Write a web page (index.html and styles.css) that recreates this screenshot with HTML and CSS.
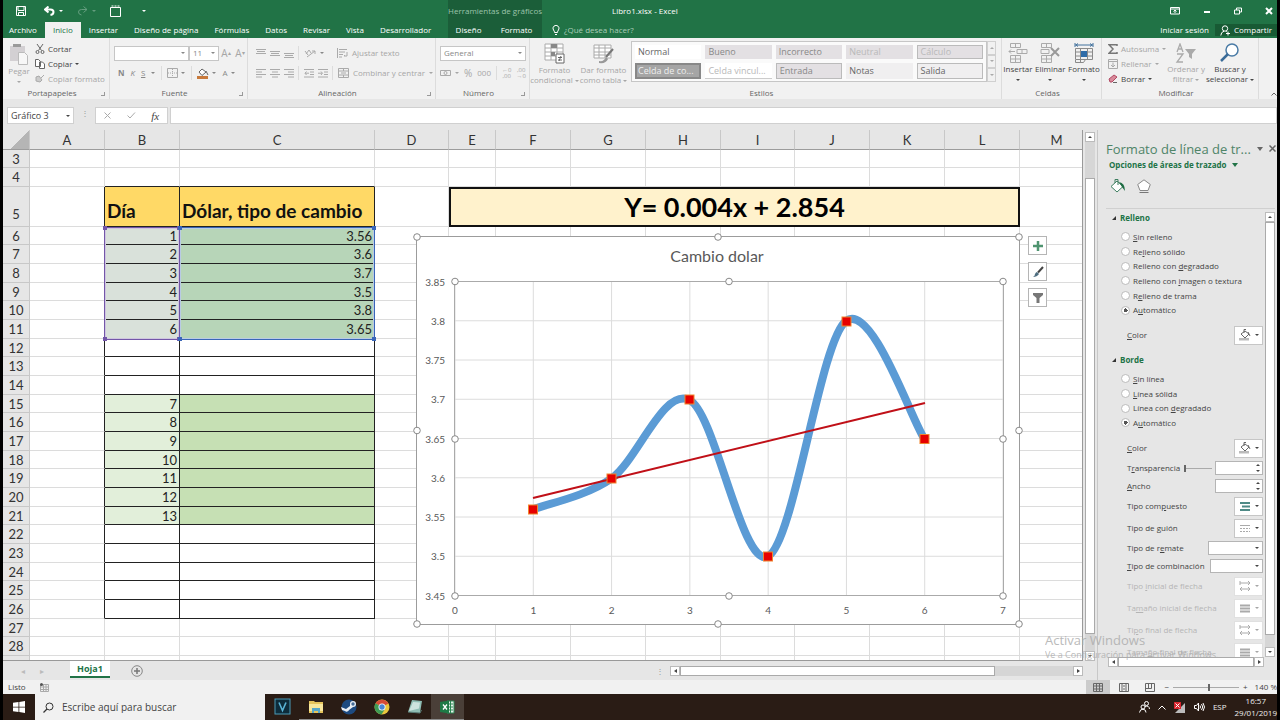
FILE: index.html
```html
<!DOCTYPE html>
<html lang="es">
<head>
  <meta charset="UTF-8" />
  <title>Libro1.xlsx - Excel</title>
  <link rel="stylesheet" href="styles.css">
</head>
<body>

<header class="top">
  <div class="top-left">
    <div class="quick">
      <button aria-label="Guardar"><svg width="10" height="10" viewBox="0 0 10 10"><path d="M.5.5h9v9h-9zM2 .5v4h6v-4M2.500 9.500v-3h5v3" class="w"/></svg></button>
      <button aria-label="Deshacer"><svg width="11" height="10" viewBox="0 0 11 10"><path d="M4.500.5L1 3.500l3.500 3M1 3.500h5.500q3 0 3 2.500T6.500 9" class="w bold"/></svg><i class="caret"></i></button>
      <button aria-label="Rehacer" class="faded"><svg width="11" height="10" viewBox="0 0 11 10"><path d="M6.500.5L10 3.500l-3.500 3M10 3.500H4.500q-3 0-3 2.500T4.500 9" class="w"/></svg><i class="caret"></i></button>
      <button aria-label="Nuevo"><svg width="12" height="12" viewBox="0 0 12 12"><path d="M.5 2.500h10v9H.5zM1.500 1h2M4.500 1h2M7.500 1h2" class="w"/></svg></button>
      <button aria-label="Personalizar"><i class="caret"></i></button>
    </div>
    <nav class="tabs">
      <a href="#">Archivo</a>
      <a href="#" class="active">Inicio</a>
      <a href="#">Insertar</a>
      <a href="#">Diseño de página</a>
      <a href="#">Fórmulas</a>
      <a href="#">Datos</a>
      <a href="#">Revisar</a>
      <a href="#">Vista</a>
      <a href="#">Desarrollador</a>
    </nav>
  </div>
  <div class="context">
    <span>Herramientas de gráficos</span>
    <nav class="tabs">
      <a href="#">Diseño</a>
      <a href="#">Formato</a>
    </nav>
  </div>
  <div class="top-right">
    <div class="title-row">
      <h1>Libro1.xlsx - Excel</h1>
      <div class="window">
        <button aria-label="Opciones de cinta"><svg width="10" height="8" viewBox="0 0 10 8"><path d="M.5.5h9v6.500h-9zM.5 2h9M5 6V3M3.500 4.500L5 3l1.500 1.500" class="w"/></svg></button>
        <button aria-label="Minimizar"><svg width="8" height="8" viewBox="0 0 8 8"><path d="M1 5h6" class="w bold"/></svg></button>
        <button aria-label="Restaurar"><svg width="8" height="8" viewBox="0 0 8 8"><path d="M.5 3h5v4h-5zM2.500 3V1h5v4h-2" class="w"/></svg></button>
        <button aria-label="Cerrar"><svg width="8" height="8" viewBox="0 0 8 8"><path d="M1 1l6 6M7 1L1 7" class="w bold"/></svg></button>
      </div>
    </div>
    <div class="tell-row">
      <button class="tell"><svg width="8" height="11" viewBox="0 0 8 11"><path d="M2.500 7.500Q2.500 6 1.500 5A3 3 0 1 1 6.500 5Q5.500 6 5.500 7.500zM3 9.500h2" class="w"/></svg>¿Qué desea hacer?</button>
      <div class="account">
        <a href="#">Iniciar sesión</a>
        <button class="share"><svg width="11" height="11" viewBox="0 0 11 11"><circle cx="5" cy="3.500" r="2.700" class="w"/><path d="M.8 10.500Q1 7 4 6.200M6 6.200l1 1M8 6.500v4M6 8.500h4" class="w"/></svg>Compartir</button>
      </div>
    </div>
  </div>
</header>

<section class="ribbon">
  <div class="group clipboard">
    <div class="tools">
      <button class="big off"><svg width="20" height="22" viewBox="0 0 20 22"><path d="M1 3h15v15H1z" fill="#d3d0d3"/><path d="M4 1h8v3H4z" fill="#9a9a9a"/><path d="M9.500 9.500h6l3 3v9h-9z" fill="#f7f7f7" stroke="#bbb"/></svg>Pegar<i class="caret"></i></button>
      <div class="stack">
        <button><svg width="10" height="10" viewBox="0 0 10 10"><path d="M2 0l4.500 6.500M8 0L3.500 6.500" class="k"/><circle cx="2.500" cy="8" r="1.500" class="k"/><circle cx="7.500" cy="8" r="1.500" class="k"/></svg>Cortar</button>
        <button><svg width="10" height="10" viewBox="0 0 10 10"><path d="M.5.5h3l2 2v5h-5zM4.500 3h3l2 2v4.500h-5z" fill="#fff" class="k"/></svg>Copiar <i class="caret"></i></button>
        <button class="off"><svg width="10" height="10" viewBox="0 0 10 10"><path d="M1 3l3-1 3 4-2 2-4-1zM6 4l3-3" fill="#ccc" class="g"/></svg>Copiar formato</button>
      </div>
    </div>
    <h2>Portapapeles <i class="launch"></i></h2>
  </div>

  <div class="group font">
    <div class="tools col">
      <div class="line">
        <span class="combo"><select aria-label="Fuente" class="font-name"><option></option></select><i class="caret"></i></span>
        <span class="combo"><select aria-label="Tamaño de fuente" class="font-size"><option>11</option></select><i class="caret"></i></span>
        <button class="off lead">A<sup>▴</sup></button>
        <button class="off">A<sup>▾</sup></button>
      </div>
      <div class="line letters">
        <button><b>N</b></button>
        <button><em>K</em></button>
        <button><u>S</u></button>
        <button aria-label="Más subrayados"><i class="caret"></i></button>
        <button class="sep" aria-label="Bordes"><svg width="11" height="10" viewBox="0 0 11 10"><path d="M5.500 1v8M1 5h9" class="g" stroke-dasharray="1 1"/><path d="M.5.5h10v9H.5z" class="g"/></svg><i class="caret"></i></button>
        <button class="sep" aria-label="Color de relleno"><svg width="12" height="11" viewBox="0 0 12 11"><path d="M2 4l3-3 4 3-4 3.500z" fill="#fff" class="k"/><path d="M9 3l2 4" class="k"/><path d="M0 8h11v3H0z" fill="#c87a3c"/></svg><i class="caret"></i></button>
        <button aria-label="Color de fuente">A<i class="caret"></i></button>
      </div>
    </div>
    <h2>Fuente <i class="launch"></i></h2>
  </div>

  <div class="group align">
    <div class="tools col">
      <div class="line">
        <button aria-label="Arriba"><svg width="10" height="9" viewBox="0 0 10 9"><path d="M0 .5h10M1 2.500h8M0 4.500h10" class="g"/></svg></button>
        <button aria-label="Medio"><svg width="10" height="9" viewBox="0 0 10 9"><path d="M0 2.500h10M1 4.500h8M0 6.500h10" class="g"/></svg></button>
        <button aria-label="Abajo"><svg width="10" height="9" viewBox="0 0 10 9"><path d="M0 4.500h10M1 6.500h8M0 8.500h10" class="g"/></svg></button>
        <button class="sep" aria-label="Orientación"><svg width="12" height="10" viewBox="0 0 12 10"><path d="M1 3l3 4M2 6l3-4 2 3M3 9l8-6M8 3h3v3" class="g"/></svg><i class="caret"></i></button>
        <button class="off wrap"><svg width="11" height="10" viewBox="0 0 11 10"><path d="M.5 0v10M2 1.500h8M2 4h6M2 6.500h4M10 4v4H7l1-1M2 9h3" class="g"/></svg>Ajustar texto</button>
      </div>
      <div class="line">
        <button aria-label="Izquierda"><svg width="10" height="9" viewBox="0 0 10 9"><path d="M0 .5h10M0 3h6M0 5.500h10M0 8h6" class="g"/></svg></button>
        <button aria-label="Centrar"><svg width="10" height="9" viewBox="0 0 10 9"><path d="M0 .5h10M2 3h6M0 5.500h10M2 8h6" class="g"/></svg></button>
        <button aria-label="Derecha"><svg width="10" height="9" viewBox="0 0 10 9"><path d="M0 .5h10M4 3h6M0 5.500h10M4 8h6" class="g"/></svg></button>
        <button class="sep" aria-label="Disminuir sangría"><svg width="10" height="9" viewBox="0 0 10 9"><path d="M0 .5h10M6 3h4M6 5.500h4M0 8h10M5 4.200H1M2.500 2.500L1 4.200 2.500 6" class="g"/></svg></button>
        <button aria-label="Aumentar sangría"><svg width="10" height="9" viewBox="0 0 10 9"><path d="M0 .5h10M6 3h4M6 5.500h4M0 8h10M0 4.200h4M3 2.500l1.500 1.700L3 6" class="g"/></svg></button>
        <button class="off sep"><svg width="11" height="10" viewBox="0 0 11 10"><path d="M.5.500h10v9H.500zM.5 3h10M.5 7h10M5.500 0v3M5.500 7v3M3 5h5" class="g"/></svg>Combinar y centrar <i class="caret"></i></button>
      </div>
    </div>
    <h2>Alineación <i class="launch"></i></h2>
  </div>

  <div class="group number">
    <div class="tools col">
      <div class="line">
        <span class="combo"><select aria-label="Formato de número"><option>General</option></select><i class="caret"></i></span>
      </div>
      <div class="line">
        <button class="off" aria-label="Moneda"><svg width="11" height="9" viewBox="0 0 11 9"><path d="M.5 1.500h10v5H.5z" class="g"/><circle cx="5.500" cy="4" r="1.500" class="g"/></svg><i class="caret"></i></button>
        <button class="off pct">%</button>
        <button class="off">000</button>
        <button class="off sep dec">←0<br>,00</button>
        <button class="off dec">,00<br>→0</button>
      </div>
    </div>
    <h2>Número <i class="launch"></i></h2>
  </div>

  <div class="group styles">
    <div class="tools">
      <button class="big off"><svg width="21" height="21" viewBox="0 0 21 21"><path d="M1 1h18v16H1z" fill="#fff" class="g"/><path d="M1 5h18M1 9h18M1 13h18M7 1v16M13 1v16" class="g"/><path d="M7 1h6v4H7zM7 9h4v4H7z" fill="#888"/><path d="M12 11h8v9h-8z" fill="#fff" class="k"/><path d="M14 14.500h4M14 17h4M17 13l-2 5" class="k"/></svg><span>Formato<br>condicional <i class="caret"></i></span></button>
      <button class="big off"><svg width="21" height="21" viewBox="0 0 21 21"><path d="M1 2h17v13H1z" fill="#fff" class="g"/><path d="M1 5h17M1 9h17M1 12h17M6 2v13M12 2v13" class="g"/><path d="M20 6l-7 8" stroke="#777" stroke-width="2"/><path d="M6 18q5 1 7-4l2 2q-2 5-9 4z" fill="#999"/></svg><span>Dar formato<br>como tabla <i class="caret"></i></span></button>
      <div class="gallery">
        <button class="plain">Normal</button>
        <button>Bueno</button>
        <button>Incorrecto</button>
        <button class="pale">Neutral</button>
        <button class="pale boxed">Cálculo</button>
        <button class="dark">Celda de co...</button>
        <button class="plain pale under">Celda vincul...</button>
        <button class="boxed">Entrada</button>
        <button class="light">Notas</button>
        <button class="boxed light">Salida</button>
      </div>
      <div class="gallery-nav">
        <button aria-label="Subir"><i class="caret up"></i></button>
        <button aria-label="Bajar"><i class="caret"></i></button>
        <button aria-label="Más"><i class="caret"></i></button>
      </div>
    </div>
    <h2>Estilos</h2>
  </div>

  <div class="group cells">
    <div class="tools">
      <button class="big"><svg width="20" height="20" viewBox="0 0 20 20"><path d="M2.500.500h10v4h-10zM7.500.5v4M2.500 12.500h10v7h-10zM7.500 12v7M2.500 16h10M9 6.500h10v4H9zM14 6.500v4M7 8.500H1M3 6.500l-2 2 2 2" class="g"/></svg>Insertar<i class="caret"></i></button>
      <button class="big"><svg width="20" height="20" viewBox="0 0 20 20"><path d="M1.500.5h10v4h-10zM6.500.5v4M1.500 12.500h10v7h-10zM6.500 12v7M1.500 16h10M1 6.500h8v4H1z" class="g"/><path d="M11 5l8 8M19 5l-8 8" stroke="#999" stroke-width="2"/></svg>Eliminar<i class="caret"></i></button>
      <button class="big"><svg width="20" height="20" viewBox="0 0 20 20"><path d="M1 2h18M1 0v4M19 0v4M4 .5L2 2l2 1.500M16 .5L18 2l-2 1.500" stroke="#41719c"/><path d="M1.500 5.500h17v11h-17zM1 9h18M1 13h18M6.500 5v14M13.500 5v11M1.500 17v2.500h8l2-3" stroke="#8a8a8a"/><path d="M7 8h6v6H7z" fill="#2f6ca8"/></svg>Formato<i class="caret"></i></button>
    </div>
    <h2>Celdas</h2>
  </div>

  <div class="group edit">
    <div class="tools">
      <div class="stack">
        <button class="off"><svg width="10" height="10" viewBox="0 0 10 10"><path d="M9 2V.8H1L5 5 1 9.200h8V8" stroke="#777" stroke-width="1.500"/></svg>Autosuma <i class="caret"></i></button>
        <button class="off"><svg width="10" height="10" viewBox="0 0 10 10"><path d="M.5.5h9v9h-9zM.5 2.500h9M5 3.500V8M3 6l2 2 2-2" class="g"/></svg>Rellenar <i class="caret"></i></button>
        <button><svg width="10" height="9" viewBox="0 0 10 9"><path d="M1 5l5-4 3 2-5 5H2z" fill="#d98a9a" stroke="#b34a64"/><path d="M5 8.500h4" class="k"/></svg>Borrar <i class="caret"></i></button>
      </div>
      <button class="big off"><svg width="22" height="20" viewBox="0 0 22 20"><path d="M2 9l3-8 3 8M3 6h4M2 11h6l-6 8h6" stroke="#aaa" stroke-width="1.300"/><path d="M10 6h11l-4 5v5l-3-2v-3z" fill="#aaa"/></svg><span>Ordenar y<br>filtrar <i class="caret"></i></span></button>
      <button class="big"><svg width="20" height="20" viewBox="0 0 20 20"><circle cx="12" cy="7" r="6" fill="#fff" stroke="#4a7ba6" stroke-width="1.500"/><path d="M8 11l-7 7" stroke="#3a6b98" stroke-width="2.500"/></svg><span>Buscar y<br>seleccionar <i class="caret"></i></span></button>
    </div>
    <h2>Modificar</h2>
  </div>
  <button class="collapse" aria-label="Contraer"><svg width="6" height="4" viewBox="0 0 6 4"><path d="M.5 3.500L3 1l2.500 2.500" class="k"/></svg></button>
</section>

<section class="formula">
  <span class="combo name-box"><select aria-label="Cuadro de nombres"><option>Gráfico 3</option></select><i class="caret"></i></span>
  <span class="dots">⋮</span>
  <div class="fx">
    <button aria-label="Cancelar"><svg width="7" height="7" viewBox="0 0 7 7"><path d="M.5.500l6 6M6.500.5l-6 6" class="g"/></svg></button>
    <button aria-label="Introducir"><svg width="9" height="7" viewBox="0 0 9 7"><path d="M.5 3.500L3 6l5-5.500" class="g"/></svg></button>
    <button class="fn">fx</button>
  </div>
  <input type="text" aria-label="Barra de fórmulas">
</section>

<main class="work">
  <div class="book">
    <div class="sheet-row">
      <div class="sheet">
        <table class="grid">
          <colgroup id="cols"></colgroup>
          <thead><tr id="letters"></tr></thead>
          <tbody id="rows"></tbody>
        </table>

        <div class="range days"><i></i><i></i><i></i><i></i></div>
        <div class="range rates"><i></i><i></i><i></i><i></i></div>

        <svg class="chart" width="616" height="400" viewBox="410 230 616 400" role="img" aria-label="Cambio dolar">
          <rect x="416.500" y="236.500" width="603" height="388" fill="#fff" stroke="#9c9c9c"/>
          <text x="717" y="262" class="chart-title">Cambio dolar</text>
          <g id="chartGrid"></g>
          <rect x="454.500" y="281.500" width="549" height="314" stroke="#aaa"/>
          <path class="curve" d="M533 509.500C546 504 585 497 611.500 478.500C637.500 460 663.500 387 689.500 400C715.500 413 742 569 768 556.500C794 543 820 341 846 321C872 302 911 419 924.500 439"/>
          <path d="M533 498L925 403" stroke="#c01018" stroke-width="2"/>
          <g id="points"></g>
          <g id="handles"></g>
        </svg>

        <div class="chart-tools">
          <button aria-label="Elementos de gráfico"><svg width="12" height="12" viewBox="0 0 12 12"><path d="M6 1v10M1 6h10" stroke="#4f9470" stroke-width="2.500"/></svg></button>
          <button aria-label="Estilos de gráfico"><svg width="12" height="12" viewBox="0 0 12 12"><path d="M11 1L6 6.500" stroke="#444" stroke-width="2"/><path d="M5 6l2 2q-2 3-6 3 2-1 2-3 1-2 2-2z" fill="#4f6e80"/></svg></button>
          <button aria-label="Filtros de gráfico"><svg width="12" height="12" viewBox="0 0 12 12"><path d="M1 1h10v2L7.500 6v5h-3V6L1 3z" fill="#777"/></svg></button>
        </div>
      </div>
      <div class="vbar main-v"><button aria-label="Subir"><i class="caret up"></i></button><span></span><button aria-label="Bajar"><i class="caret"></i></button></div>
    </div>
    <div class="sheet-tabs">
      <button class="nav" aria-label="Anterior">◂</button>
      <button class="nav" aria-label="Siguiente">▸</button>
      <button class="sheet-tab">Hoja1</button>
      <button class="add" aria-label="Hoja nueva"><svg width="12" height="12" viewBox="0 0 12 12"><circle cx="6" cy="6" r="5.300" stroke="#888"/><path d="M6 3v6M3 6h6" stroke="#777" stroke-width="1.500"/></svg></button>
      <span class="dots">⋮</span>
      <div class="hbar main-h"><button aria-label="Izquierda"><i class="caret left"></i></button><span></span><button aria-label="Derecha"><i class="caret right"></i></button></div>
    </div>
  </div>

  <aside class="pane">
    <div class="pane-head">
      <h2>Formato de línea de tr...</h2>
      <button aria-label="Opciones"><i class="caret large"></i></button>
      <button aria-label="Cerrar"><svg width="7" height="7" viewBox="0 0 7 7"><path d="M.5.5l6 6M6.500.5l-6 6" stroke="#666" stroke-width="1.500"/></svg></button>
    </div>
    <button class="pane-sub">Opciones de áreas de trazado <i class="caret large"></i></button>
    <div class="pane-icons">
      <button aria-label="Relleno y línea"><svg width="16" height="16" viewBox="0 0 16 16"><path d="M1 8.500L7 3l6 5.500-6 5.500z" fill="#fff" stroke="#3f7f61"/><path d="M5 5V1.500h3V7" stroke="#3f7f61"/><path d="M9 4q6 1 6 9l-3-4z" fill="#1d6b42"/></svg></button>
      <button aria-label="Efectos"><svg width="14" height="14" viewBox="0 0 14 14"><path d="M7 .8L13.300 5.500 11 11.500H3L.7 5.500z" fill="#fff" stroke="#888"/><path d="M2.500 13.500h9" stroke="#777"/></svg></button>
    </div>
    <div class="pane-mid">
      <form class="options">
        <h3>Relleno</h3>
        <div class="radios">
          <label><input type="radio" name="fill"><span><u>S</u>in relleno</span></label>
          <label><input type="radio" name="fill"><span>Re<u>l</u>leno sólido</span></label>
          <label><input type="radio" name="fill"><span>Relleno con <u>d</u>egradado</span></label>
          <label><input type="radio" name="fill"><span>Relleno con <u>i</u>magen o textura</span></label>
          <label><input type="radio" name="fill"><span>R<u>e</u>lleno de trama</span></label>
          <label><input type="radio" name="fill" checked><span>A<u>u</u>tomático</span></label>
        </div>
        <div class="field first"><label for="fillColor"><u>C</u>olor</label><button type="button" id="fillColor" class="pick"><svg width="12" height="12" viewBox="0 0 12 12"><path d="M2 5l4-3 4 3-4 4zM5 4V.5h2" fill="#fff" class="k"/><path d="M9 3l2 4" class="k"/><path d="M0 9h10v2.500H0z" fill="#bbb"/></svg><i class="caret"></i></button></div>
        <h3>Borde</h3>
        <div class="radios">
          <label><input type="radio" name="line"><span><u>S</u>in línea</span></label>
          <label><input type="radio" name="line"><span><u>L</u>ínea sólida</span></label>
          <label><input type="radio" name="line"><span>Línea con <u>d</u>egradado</span></label>
          <label><input type="radio" name="line" checked><span>A<u>u</u>tomático</span></label>
        </div>
        <div class="field first"><label for="lineColor"><u>C</u>olor</label><button type="button" id="lineColor" class="pick"><svg width="12" height="12" viewBox="0 0 12 12"><path d="M2 5l4-3 4 3-4 4zM5 4V.5h2" fill="#fff" class="k"/><path d="M9 3l2 4" class="k"/><path d="M0 9h10v2.500H0z" fill="#bbb"/></svg><i class="caret"></i></button></div>
        <div class="field short"><label for="transp">T<u>r</u>ansparencia</label><input type="range" id="transp" value="0"><span class="spin"><input type="text" aria-label="Valor de transparencia"><i class="caret up"></i><i class="caret"></i></span></div>
        <div class="field short"><label for="width"><u>A</u>ncho</label><span class="spin"><input type="text" id="width"><i class="caret up"></i><i class="caret"></i></span></div>
        <div class="field"><label for="compound">Tipo com<u>p</u>uesto</label><button type="button" id="compound" class="pick"><svg width="12" height="9" viewBox="0 0 12 9"><path d="M1 1h10M3 4.500h8M1 8h10" stroke="#4e8a86" stroke-width="1.800"/></svg><i class="caret"></i></button></div>
        <div class="field"><label for="dash">Tipo de <u>g</u>uión</label><button type="button" id="dash" class="pick"><svg width="12" height="9" viewBox="0 0 12 9"><path d="M1 1.500h10" class="g"/><path d="M1 4.500h10M1 7.500h10" class="g" stroke-dasharray="2 1"/></svg><i class="caret"></i></button></div>
        <div class="field short"><label for="cap">Tipo de r<u>e</u>mate</label><span class="combo wide"><select id="cap"><option></option></select><i class="caret"></i></span></div>
        <div class="field short"><label for="join"><u>T</u>ipo de combinación</label><span class="combo"><select id="join"><option></option></select><i class="caret"></i></span></div>
        <div class="field off"><label for="a1">Tipo <u>i</u>nicial de flecha</label><button type="button" id="a1" class="pick"><svg width="12" height="10" viewBox="0 0 12 10"><path d="M1 2h10M1 8h10M9 0l2 2-2 2M9 6l2 2-2 2M1 0v4M3 6L1 8l2 2" class="g"/></svg><i class="caret"></i></button></div>
        <div class="field off"><label for="a2">Ta<u>m</u>año inicial de flecha</label><button type="button" id="a2" class="pick"><svg width="12" height="9" viewBox="0 0 12 9"><path d="M1 1.500h10M1 4.500h10M1 7.500h10" class="g" stroke-width="2"/></svg><i class="caret"></i></button></div>
        <div class="field off"><label for="a3">Ti<u>p</u>o final de flecha</label><button type="button" id="a3" class="pick"><svg width="12" height="10" viewBox="0 0 12 10"><path d="M1 2h10M1 8h10M9 0l2 2-2 2M9 6l2 2-2 2M1 0v4M3 6L1 8l2 2" class="g"/></svg><i class="caret"></i></button></div>
        <div class="field off"><label for="a4">Tama<u>ñ</u>o final de flecha</label><button type="button" id="a4" class="pick"><svg width="12" height="9" viewBox="0 0 12 9"><path d="M1 1.500h10M1 4.500h10M1 7.500h10" class="g" stroke-width="2"/></svg><i class="caret"></i></button></div>
      </form>
      <div class="vbar pane-v"><button aria-label="Subir"><i class="caret up"></i></button><span></span><button aria-label="Bajar"><i class="caret"></i></button></div>
    </div>
    <div class="hbar pane-h"><button aria-label="Izquierda"><i class="caret left"></i></button><span></span><button aria-label="Derecha"><i class="caret right"></i></button></div>
  </aside>

  <div class="watermark">
    <strong>Activar Windows</strong>
    <p>Ve a Configuración para activar Windows.</p>
  </div>
</main>

<div class="status">
  <span>Listo</span>
  <svg width="10" height="9" viewBox="0 0 10 9"><path d="M.5 1.500h8v7h-8zM1 4h8M1 6.500h8M3.500 2v7M6 2v7" class="g"/><circle cx="1.500" cy="1.500" r="1.500" fill="#555"/></svg>
  <div class="views">
    <button class="on" aria-label="Normal"><svg width="11" height="9" viewBox="0 0 11 9"><path d="M.5.5h9v8h-9zM.5 3h9M.5 6h9M3.500.5v8M6.500.5v8" class="k"/></svg></button>
    <button aria-label="Diseño de página"><svg width="11" height="9" viewBox="0 0 11 9"><path d="M.5.5h9v8h-9zM3 .5v8M7 .5v8M4 3h2M4 6h2" class="k"/></svg></button>
    <button aria-label="Salto de página"><svg width="11" height="9" viewBox="0 0 11 9"><path d="M.5.5h9v8h-9zM3.500.5v5M6.500.5v5h-6" class="k"/></svg></button>
    <span>−</span>
    <input type="range" aria-label="Zoom" min="0" max="200" value="110">
    <span>+</span>
    <span class="zoom">140 %</span>
  </div>
</div>

<footer class="taskbar">
  <button class="start" aria-label="Inicio"><svg width="12" height="12" viewBox="0 0 12 12"><path d="M0 1.700L5.500 1v4.700H0zM6.300.9L12 0v5.700H6.300zM0 6.400h5.500V11L0 10.300zM6.300 6.400H12V12l-5.700-.9z" fill="#fff"/></svg></button>
  <label class="search"><svg width="11" height="11" viewBox="0 0 11 11"><circle cx="6.500" cy="4.500" r="3.500" stroke="#333"/><path d="M4 7L.5 10.500" stroke="#333" stroke-width="1.300"/></svg><input type="text" placeholder="Escribe aquí para buscar" aria-label="Buscar"></label>
  <div class="apps">
    <button aria-label="Vegas"><svg width="17" height="17" viewBox="0 0 17 17"><rect x="1" y="1" width="15" height="15" fill="#0d2c3b" stroke="#4a9ab8"/><path d="M5 4.500l3.500 8 3.500-8" stroke="#5ab4d6" stroke-width="1.600"/></svg></button>
    <button class="run" aria-label="Explorador"><svg width="16" height="14" viewBox="0 0 16 14"><path d="M1 1h5l1 1h8v11H1z" fill="#e5c45c"/><path d="M1 4h14v7H1z" fill="#f8e79c"/><path d="M4 8h8v5h-2v-2H6v2H4z" fill="#58a8c8"/></svg></button>
    <button class="run" aria-label="Steam"><svg width="16" height="16" viewBox="0 0 16 16"><circle cx="8" cy="8" r="7.500" fill="#1d4a80"/><path d="M0 8l5 2 4-3V5a3 3 0 1 1 3 3l-4 3a2.500 2.500 0 0 1-4 1L1 11z" fill="#e8eef4"/><circle cx="12" cy="5" r="1.700" fill="#446c98"/></svg></button>
    <button class="run" aria-label="Chrome"><svg width="16" height="16" viewBox="0 0 16 16"><circle cx="8" cy="8" r="7.500" fill="#e9c63d"/><path d="M8 8L1.500 4.300A7.500 7.500 0 0 1 14.500 4.500z" fill="#d64a38"/><path d="M8 8L1.500 4.300A7.500 7.500 0 0 0 7.500 15.500L11 10z" fill="#3f9b56"/><circle cx="8" cy="8" r="3.500" fill="#fff"/><circle cx="8" cy="8" r="2.700" fill="#4b85d6"/></svg></button>
    <button class="run" aria-label="Notas"><svg width="16" height="16" viewBox="0 0 16 16"><path d="M5 1l10 1-2 12-12-1z" fill="#8fbdb4"/><path d="M6 3l7 .5-1 6L2 12z" fill="#cde3de"/><path d="M1 13l12 1 1.500-3" stroke="#5b7d78"/></svg></button>
    <button class="run current" aria-label="Excel"><svg width="15" height="14" viewBox="0 0 15 14"><path d="M7 1h7v12H7z" fill="#e4f1e9" stroke="#2a8653"/><path d="M8 4h5M8 7h5M8 10h5M10.500 1v12" stroke="#2a8653"/><path d="M0 2l9-1.500v13L0 12z" fill="#1e7a46"/><path d="M3 4.500l4 5M7 4.500l-4 5" stroke="#fff" stroke-width="1.300"/></svg></button>
  </div>
  <div class="tray">
    <svg width="11" height="12" viewBox="0 0 11 12"><circle cx="7.500" cy="2.500" r="2" class="w"/><circle cx="4" cy="6" r="2" class="w"/><path d="M.5 11.500Q1 8 4 8.200T7 11.500M6 5.500Q10 4 10.500 8" class="w"/></svg>
    <svg width="8" height="5" viewBox="0 0 8 5"><path d="M.5 4.500L4 1l3.500 3.500" class="w"/></svg>
    <svg width="12" height="11" viewBox="0 0 12 11"><path d="M11 1v10H1z" fill="#bbb"/><path d="M0 0h7v7H0z" fill="#d8262f"/><path d="M1.500 1.500l4 4M5.500 1.500l-4 4" class="w"/></svg>
    <svg width="11" height="10" viewBox="0 0 11 10"><path d="M.5 3.500h2l2-2.500v8l-2-2.500h-2zM6 3.500q1 1.500 0 3M7.500 2q2.500 3 0 6M9 1q3 4 0 8" class="w"/></svg>
    <span>ESP</span>
    <time>16:57<br>29/01/2019</time>
  </div>
</footer>

<script>
  var letters = ["A", "B", "C", "D", "E", "F", "G", "H", "I", "J", "K", "L", "M"];
  var days = { 6: 1, 7: 2, 8: 3, 9: 4, 10: 5, 11: 6, 15: 7, 16: 8, 17: 9, 18: 10, 19: 11, 20: 12, 21: 13 };
  var rates = { 6: "3.56", 7: "3.6", 8: "3.7", 9: "3.5", 10: "3.8", 11: "3.65" };

  // columns and their letters
  var cols = '<col class="c-num">';
  var head = '<th class="corner"></th>';
  letters.forEach(function (l) {
    cols += '<col class="c-' + l + '">';
    head += "<th>" + l + "</th>";
  });
  document.getElementById("cols").innerHTML = cols;
  document.getElementById("letters").innerHTML = head;

  // rows 3 to 28, and the empty top of the next one
  var body = "";
  for (var r = 3; r <= 29; r++) {
    body += '<tr class="r' + r + '"><th>' + (r < 29 ? r : "") + "</th>";
    letters.forEach(function (l, i) {
      var cls = "", text = "";
      if (r >= 5 && r <= 26) {
        if (l === "A") cls = "edge";
        if (l === "B" || l === "C") cls = "box";
        if (l === "B" && days[r]) { cls += r < 12 ? " day" : " next-day"; text = days[r]; }
        if (l === "C" && days[r]) { cls += r < 12 ? " rate" : " next-rate"; text = rates[r] || ""; }
      }
      if (r === 4 && (l === "B" || l === "C")) cls = "under";
      if (r === 5) {
        if (l === "B") { cls = "box title"; text = "Día"; }
        if (l === "C") { cls = "box title"; text = "Dólar, tipo de cambio"; }
        if (l === "E") { body += '<td colspan="8" class="equation">Y= 0.004x + 2.854</td>'; return; }
        if (i > 4 && l !== "M") return;
      }
      body += '<td class="' + cls + '">' + text + "</td>";
    });
    body += "</tr>";
  }
  document.getElementById("rows").innerHTML = body;

  // chart gridlines and axis labels
  var lines = "";
  for (var x = 0; x <= 7; x++) {
    var px = 455 + x * 548 / 7;
    lines += '<path d="M' + px + ' 282V596" stroke="#dcdcdc"/><text x="' + px + '" y="614" class="axis">' + x + "</text>";
  }
  ["3.85", "3.8", "3.75", "3.7", "3.65", "3.6", "3.55", "3.5", "3.45"].forEach(function (v, i) {
    var py = 281.5 + i * 314 / 8;
    lines += '<path d="M455 ' + py + 'H1003" stroke="#dcdcdc"/><text x="445" y="' + (py + 4) + '" class="axis y">' + v + "</text>";
  });
  document.getElementById("chartGrid").innerHTML = lines;

  document.getElementById("points").innerHTML = [[533, 509.5], [611.5, 478.5], [689.5, 399.5], [768, 556.5], [846.5, 321.5], [924.5, 439]].map(function (p) {
    return '<rect x="' + (p[0] - 4.5) + '" y="' + (p[1] - 4.5) + '" width="9" height="9" fill="#e60000" stroke="#f0862f"/>';
  }).join("");

  // selection handles of the chart and of the plot area
  var handles = "";
  [[417, 718, 1019, 237, 430.5, 624], [455, 729, 1003, 281.5, 439, 596]].forEach(function (b) {
    for (var i = 0; i < 3; i++) {
      for (var j = 3; j < 6; j++) {
        if (i === 1 && j === 4) continue;
        handles += '<circle cx="' + b[i] + '" cy="' + b[j] + '" r="3.3" fill="#fff" stroke="#888"/>';
      }
    }
  });
  document.getElementById("handles").innerHTML = handles;
</script>
</body>
</html>
```
FILE: styles.css
```css
* {
  box-sizing: border-box;
}
body {
  margin: 0;
  padding: 0 3px;
  height: 100vh;
  display: flex;
  flex-direction: column;
  overflow: hidden;
  background: #000;
  color: #444;
  font-family: "Open Sans", "Noto Sans", sans-serif;
  font-size: 8px;
  line-height: 12px;
}
h1, h2, h3, p {
  margin: 0;
  font-size: 8px;
  font-weight: 400;
}
button, select, input {
  margin: 0;
  padding: 0;
  border: 0;
  border-radius: 0;
  background: none;
  color: inherit;
  font: inherit;
  outline: none;
}
button {
  display: flex;
  align-items: center;
  justify-content: center;
  white-space: nowrap;
}
select {
  appearance: none;
}
a {
  color: inherit;
  text-decoration: none;
}
svg {
  flex: none;
  fill: none;
}
.w { stroke: #fff; }
.k { stroke: #666; }
.g { stroke: #aaa; }
.w.bold { stroke-width: 2; }
.off { color: #a6a6a6; }

/* small arrows */
.caret {
  flex: none;
  display: inline-block;
  vertical-align: middle;
  border: 2px solid transparent;
  border-top-color: currentColor;
  border-bottom: 0;
}
.caret.up {
  border-bottom: 2px solid currentColor;
  border-top: 0;
}
.caret.left {
  border: 2px solid transparent;
  border-right: 3px solid currentColor;
  border-left: 0;
}
.caret.right {
  border: 2px solid transparent;
  border-left: 3px solid currentColor;
  border-right: 0;
}
.caret.large {
  border-width: 4px 3px 0;
}

/* title bar and tabs */
.top {
  display: flex;
  height: 38px;
  background: #217346;
  color: #fff;
}
.top-left, .top-right, .context {
  display: flex;
  flex-direction: column;
}
.top-left {
  width: 445px;
}
.quick {
  display: flex;
  align-items: center;
  height: 22px;
  padding: 0 13px;
  gap: 18px;
}
.quick button {
  gap: 4px;
}
.quick button:nth-child(n+3) {
  margin-left: -4px;
}
.quick button:last-child {
  margin-left: 2px;
}
.faded {
  opacity: 0.3;
}
.tabs {
  display: flex;
  height: 16px;
}
.tabs a {
  padding: 2px 8px;
  white-space: nowrap;
}
.tabs a:first-child {
  padding-left: 6px;
}
.tabs .active {
  background: #f1f1f1;
  color: #217346;
}
.context {
  width: 94px;
  background: #1b5e39;
}
.context > span {
  height: 22px;
  line-height: 22px;
  text-align: center;
  white-space: nowrap;
  color: #9cc4ab;
}
.context .tabs {
  justify-content: space-around;
}
.top-right {
  flex: 1;
}
.title-row, .tell-row {
  display: flex;
  justify-content: space-between;
  align-items: center;
  height: 22px;
}
.title-row {
  padding: 0 4px 0 70px;
}
.window {
  display: flex;
  gap: 23px;
}
.tell-row {
  height: 16px;
  padding-left: 10px;
}
.tell {
  gap: 4px;
  color: #a9ccb7;
}
.account {
  display: flex;
  gap: 6px;
}
.share {
  gap: 3px;
  padding: 0 5px;
  background: #185a34;
}

/* ribbon */
.ribbon {
  display: flex;
  height: 61px;
  background: #f1f1f1;
}
.group {
  display: flex;
  flex-direction: column;
  justify-content: space-between;
  border-right: 1px solid #dcdcdc;
}
.group h2 {
  position: relative;
  height: 12px;
  padding-right: 8px;
  line-height: 12px;
  text-align: center;
  color: #666;
}
.launch {
  position: absolute;
  right: 4px;
  bottom: 3px;
  width: 4px;
  height: 4px;
  border: solid #999;
  border-width: 0 1px 1px 0;
}
.tools {
  display: flex;
  height: 48px;
  padding-top: 3px;
}
.tools.col {
  flex-direction: column;
  gap: 4px;
  padding: 7px 0 0 4px;
}
.line {
  display: flex;
  align-items: center;
  gap: 4px;
  height: 16px;
  color: #888;
}
.stack {
  display: flex;
  flex-direction: column;
}
.stack button {
  justify-content: flex-start;
  gap: 3px;
  height: 15px;
}
.big {
  flex-direction: column;
  justify-content: flex-start;
  gap: 1px;
  padding-top: 2px;
  line-height: 10px;
}
.sep {
  padding-left: 5px;
  border-left: 1px solid #dcdcdc;
}
.line button {
  gap: 4px;
  height: 14px;
}
.combo {
  position: relative;
  display: flex;
  align-items: center;
}
.combo select {
  width: 100%;
  height: 15px;
  padding: 0 3px;
  border: 1px solid #c6c6c6;
  background: #fff;
}
.combo .caret {
  position: absolute;
  right: 4px;
}
.clipboard { width: 107px; }
.clipboard .big { width: 32px; }
.font { width: 138px; }
.font .line:first-child { gap: 0; }
.font .font-name { width: 75px; }
.font .font-size { width: 30px; }
.font .line:first-child button {
  width: 14px;
  gap: 0;
  font-size: 10px;
}
.font sup { font-size: 6px; }
.letters { padding-left: 4px; gap: 6px; }
.letters .sep { padding-left: 5px; }
.letters .sep svg + .caret { margin-left: -1px; }
.align { width: 188px; }
.align .tools { padding-left: 8px; }
.align .wrap { margin-left: 9px; }
.number { width: 94px; }
.number .combo { width: 86px; }
.number .line { gap: 5px; }
.number .pct { font-size: 10px; }
.number .dec {
  font-size: 6px;
  line-height: 6px;
}
.styles {
  flex: 1;
}
.styles .big { width: 49px; }
.gallery {
  flex: 1;
  display: grid;
  grid-template-columns: repeat(5, 1fr);
  gap: 4px;
  height: 41px;
  margin-left: 3px;
  padding: 3px;
  border: 1px solid #c6c6c6;
  background: #fafafa;
}
.gallery button {
  justify-content: flex-start;
  padding: 0 3px;
  background: #e3e0e3;
  color: #888;
  font-size: 9px;
}
.gallery .plain { background: #fff; }
.gallery .light {
  background: #f0eff0;
  color: #666;
}
.gallery .boxed { border: 1px solid #bbb; }
.gallery .pale { color: #b9b9b9; }
.gallery .under { border-bottom: 1px solid #ccc; }
.gallery .plain:first-child { color: #666; }
.gallery .dark {
  padding: 0 1px;
  background: #a5a5a5;
  color: #eee;
  border: 2px solid #888;
}
.gallery-nav {
  display: grid;
  width: 9px;
  height: 41px;
  margin-right: 5px;
  color: #aaa;
}
.gallery-nav button { border: 1px solid #d0d0d0; }
.cells { width: 100px; }
.cells .tools { justify-content: space-around; }
.cells .big, .edit .big:last-child { color: #444; }
.edit { width: 157px; }
.edit .tools {
  justify-content: space-between;
  padding-left: 6px;
  padding-right: 4px;
}
.big .caret { margin-top: 4px; }
.big span .caret { margin-top: 0; }
.collapse {
  align-self: flex-end;
  justify-content: flex-end;
  width: 18px;
  height: 10px;
}

/* formula bar */
.formula {
  display: flex;
  height: 31px;
  padding: 8px 0 6px 4px;
  background: #e6e6e6;
}
.formula .name-box { width: 67px; }
.name-box select { height: 17px; border-color: #d0d0d0; font-size: 9px; }
.dots {
  width: 21px;
  text-align: center;
  color: #999;
}
.fx {
  display: flex;
  align-items: center;
  justify-content: space-around;
  width: 73px;
  margin-right: 2px;
  background: #fff;
  border: 1px solid #d0d0d0;
}
.fn {
  font: italic 11px "Liberation Serif", serif;
}
.formula input {
  flex: 1;
  background: #fff;
  border: 1px solid #d0d0d0;
}

/* worksheet */
.work {
  position: relative;
  flex: 1;
  min-height: 0;
  display: flex;
  background: #e6e6e6;
}
.book {
  flex: 1;
  min-width: 0;
  display: flex;
  flex-direction: column;
}
.sheet-row {
  flex: 1;
  min-height: 0;
  display: flex;
}
.sheet {
  position: relative;
  flex: 1;
  overflow: hidden;
  background: #fff;
  border-right: 1px solid #999;
  border-bottom: 1px solid #999;
}
/* the last column runs on under the scroll bar */
.grid {
  width: calc(100% + 12px);
  table-layout: fixed;
  border-collapse: separate;
  border-spacing: 0;
  font-family: Lato, "Open Sans", sans-serif;
  font-size: 13px;
  line-height: 16px;
  color: #222;
}
.c-num { width: 27px; }
.c-A, .c-B, .c-F, .c-G, .c-H, .c-J, .c-K, .c-L { width: 75px; }
.c-D, .c-I { width: 74px; }
.c-C { width: 195px; }
.c-E { width: 47px; }
.grid th {
  padding: 0;
  background: #e6e6e6;
  border-right: 1px solid #c8c8c8;
  border-bottom: 1px solid #c8c8c8;
  font-weight: 400;
  color: #333;
  overflow: hidden;
}
.grid thead th {
  height: 20px;
  border-bottom-color: #9c9c9c;
}
.grid .corner {
  background: linear-gradient(135deg, #e6e6e6 60%, #b5b5b5 60%);
}
.grid td {
  height: 19px;
  padding: 0 2px;
  border-right: 1px solid #dcdcdc;
  border-bottom: 1px solid #dcdcdc;
  text-align: right;
  white-space: nowrap;
}
.grid tr:nth-child(3n+1) td { height: 18px; }
.grid .r3 td, .grid .r4 td { height: 19px; }
.grid .r5 td { height: 40px; }
.grid .r5 th { vertical-align: bottom; padding-bottom: 4px; }
.grid td.edge { border-right-color: #222; }
.grid td.under { border-bottom-color: #222; }
.grid td.box {
  border-right-color: #222;
  border-bottom-color: #222;
}
.grid .title {
  background: #ffd966;
  text-align: left;
  vertical-align: bottom;
  padding-bottom: 7px;
  font-size: 19px;
  font-weight: 700;
  color: #111;
}
.grid .equation {
  background: #fff2cc;
  border: 2px solid #111;
  text-align: center;
  font-size: 27px;
  font-weight: 700;
  color: #000;
}
.grid .day { background: #d9e1da; }
.grid .rate { background: #b7d5b8; }
.grid .next-day { background: #e2efda; }
.grid .next-rate { background: #c6e0b4; }

/* coloured outlines round the plotted ranges */
.range {
  position: absolute;
  top: 97px;
  left: 101px;
  width: 76px;
  height: 113px;
  border: 1px solid #7356a8;
  box-shadow: inset 0 0 0 1px #cfc6df;
}
.range.rates {
  left: 176px;
  width: 196px;
  border-color: #3a66b8;
  border-left-color: #7356a8;
  box-shadow: inset 0 0 0 1px #b9cbe4;
}
.range i {
  position: absolute;
  width: 4px;
  height: 4px;
  background: #7356a8;
}
.rates i { background: #3a66b8; }
.range i:nth-child(1) { top: -2px; left: -2px; }
.range i:nth-child(2) { top: -2px; right: -2px; }
.range i:nth-child(3) { bottom: -2px; left: -2px; }
.range i:nth-child(4) { bottom: -2px; right: -2px; }

.chart {
  position: absolute;
  left: 407px;
  top: 100px;
  font-family: Lato, sans-serif;
}
.chart-title {
  font-size: 16px;
  text-anchor: middle;
  fill: #595959;
}
.axis {
  font-size: 10px;
  text-anchor: middle;
  fill: #595959;
}
.axis.y { text-anchor: end; }
.curve {
  stroke: #5b9bd5;
  stroke-width: 8;
  stroke-linecap: round;
}
.chart-tools {
  position: absolute;
  left: 1025px;
  top: 106px;
  display: grid;
  gap: 7px;
}
.chart-tools button {
  width: 19px;
  height: 19px;
  background: #fff;
  border: 1px solid #b5b5b5;
}

/* scroll bars */
.vbar {
  display: flex;
  flex-direction: column;
  width: 10px;
  background: #d6d6d6;
}
.hbar {
  display: flex;
  height: 10px;
  background: #d6d6d6;
}
.vbar button, .hbar button {
  width: 10px;
  height: 10px;
  background: #fff;
  border: 1px solid #bbb;
}
.vbar span, .hbar span {
  flex: 1;
  background: #fff;
  border: 1px solid #aaa;
}
.main-v { margin: 2px 2px 0; }
.main-v span { margin: 36px 0 17px; }

/* sheet tabs */
.sheet-tabs {
  display: flex;
  align-items: center;
  height: 19px;
  padding-right: 14px;
}
.nav {
  width: 19px;
  color: #bbb;
}
.nav:first-child { margin-left: 10px; }
.sheet-tab {
  align-self: flex-start;
  width: 40px;
  height: 17px;
  margin: 0 21px 0 19px;
  background: #fff;
  border-bottom: 2px solid #217346;
  color: #217346;
  font-size: 9px;
  font-weight: 700;
}
.sheet-tabs .dots { margin-left: auto; }
.main-h { width: 413px; }
.main-h span { margin-right: 78px; }

/* format pane */
.pane {
  display: flex;
  flex-direction: column;
  width: 180px;
  padding: 8px 2px 13px 8px;
  border-left: 1px solid #c8c8c8;
}
.pane-head {
  display: flex;
  align-items: center;
  gap: 6px;
  height: 21px;
  color: #666;
}
.pane-head h2 {
  flex: 1;
  color: #4f8468;
  font-size: 13px;
  white-space: nowrap;
}
.pane-sub {
  align-self: flex-start;
  gap: 6px;
  padding: 0 3px;
  color: #217346;
  font-weight: 700;
}
.pane-icons {
  display: flex;
  gap: 11px;
  padding: 8px 4px 15px;
  border-bottom: 1px solid #d0d0d0;
  height: 38px;
}
.pane-mid {
  flex: 1;
  min-height: 0;
  display: flex;
  justify-content: space-between;
  padding-top: 3px;
}
.options {
  flex: 1;
  padding-right: 2px;
  overflow: hidden;
}
.options h3 {
  padding-left: 14px;
  color: #217346;
  font-weight: 700;
}
.options h3::before {
  content: "";
  float: left;
  margin: 4px 4px 0 -8px;
  border-left: 4px solid transparent;
  border-bottom: 4px solid #333;
}
.radios {
  padding: 5px 0 0 15px;
}
.radios label {
  display: flex;
  align-items: center;
  gap: 3px;
  height: 15px;
  white-space: nowrap;
}
.radios label:nth-child(3n) { height: 14px; }
.radios input {
  appearance: none;
  width: 9px;
  height: 9px;
  border: 1px solid #bbb;
  border-radius: 50%;
  background: #fff;
}
.radios input:checked {
  background: radial-gradient(#555 0 2px, #fff 2px);
}
.field {
  display: flex;
  align-items: center;
  height: 22px;
  padding-left: 21px;
}
.field.short { height: 18px; }
.field.first { margin-top: 7px; }
.field.first + h3 { margin-top: 8px; }
.field label {
  flex: 1;
  white-space: nowrap;
}
.field.off label { color: #b5b5b5; }
.pick {
  gap: 4px;
  width: 29px;
  height: 19px;
  background: #fff;
  border: 1px solid #c6c6c6;
}
.off .pick { border-color: #e0e0e0; }
.spin {
  position: relative;
  width: 48px;
}
.spin input {
  display: block;
  width: 100%;
  height: 14px;
  background: #fff;
  border: 1px solid #b5b5b5;
}
.spin .caret {
  position: absolute;
  right: 3px;
  top: 3px;
}
.spin .caret + .caret { top: 9px; }
.field .combo { width: 53px; }
.field .combo.wide { width: 55px; }
.field .combo select { border-color: #b5b5b5; height: 14px; }
input[type="range"] {
  appearance: none;
  width: 28px;
  height: 8px;
  margin-right: 3px;
  background: linear-gradient(#aaa, #aaa) center / 100% 1px no-repeat;
}
input[type="range"]::-webkit-slider-thumb {
  appearance: none;
  width: 2px;
  height: 7px;
  background: #666;
}
.pane-v span { margin-bottom: 12px; }
.pane-h {
  width: 156px;
  margin-left: 2px;
}

.watermark {
  position: absolute;
  right: 50px;
  bottom: 18px;
  width: 182px;
  color: #aaa;
  opacity: 0.8;
  white-space: nowrap;
}
.watermark strong {
  display: block;
  font-size: 13px;
  line-height: 16px;
  font-weight: 400;
}
.watermark p { font-size: 9px; line-height: 14px; }

/* status bar */
.status {
  display: flex;
  align-items: center;
  gap: 14px;
  height: 14px;
  padding-left: 5px;
  background: #f1f1f1;
}
.views {
  display: flex;
  align-items: center;
  margin-left: auto;
  gap: 2px;
}
.views button { width: 24px; height: 14px; }
.views .on { background: #ccc; }
.views input[type="range"] { width: 66px; margin: 0 2px; }
.views .zoom { margin-left: 5px; white-space: nowrap; }

/* taskbar */
.taskbar {
  display: flex;
  height: 26px;
  background: #2a1c15;
  color: #eee;
}
.start { width: 32px; }
.search {
  display: flex;
  align-items: center;
  gap: 8px;
  width: 230px;
  padding-left: 8px;
  background: #f1f1f1;
}
.search input {
  flex: 1;
  font-size: 10px;
}
.search input::placeholder { color: #444; }
.apps {
  display: flex;
  margin-left: 1px;
}
.apps button {
  width: 33px;
  border-bottom: 1px solid transparent;
}
.apps .run { border-bottom-color: #8c8c8c; }
.apps .current { background: #4a3f38; }
.tray {
  display: flex;
  align-items: center;
  gap: 8px;
  margin-left: auto;
}
.tray time {
  text-align: center;
}
```
